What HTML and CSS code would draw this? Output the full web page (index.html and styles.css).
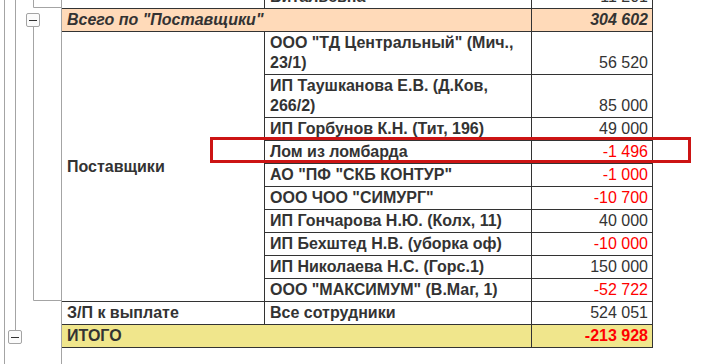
FILE: index.html
```html
<!DOCTYPE html>
<html lang="ru">
<head>
<meta charset="utf-8">
<title>Отчет</title>
<link rel="stylesheet" href="styles.css">
</head>
<body>
<div class="outline">
  <svg width="61" height="364" viewBox="0 0 61 364">
    <g stroke="#a4a4a4" stroke-width="1" fill="none">
      <line x1="4.5" y1="0" x2="4.5" y2="364"/>
      <line x1="15.5" y1="0" x2="15.5" y2="330"/>
      <polyline points="33.5,0 33.5,7.5 61,7.5"/>
      <polyline points="33.5,27 33.5,300.5 61,300.5"/>
    </g>
    <rect x="26.5" y="13.5" width="13" height="13" rx="1.5" fill="#fbfbfb" stroke="#a4a4a4"/>
    <line x1="29" y1="20.5" x2="37" y2="20.5" stroke="#333" stroke-width="1"/>
    <rect x="8.5" y="330.5" width="13" height="13" rx="1.5" fill="#fbfbfb" stroke="#a4a4a4"/>
    <line x1="11" y1="337.5" x2="19" y2="337.5" stroke="#333" stroke-width="1"/>
  </svg>
</div>
<div class="panel">
  <table class="report">
    <colgroup>
      <col class="c1"><col class="c2"><col class="c3">
    </colgroup>
    <tr>
      <td></td>
      <td class="name">Витальевна</td>
      <td class="num">11&nbsp;201</td>
    </tr>
    <tr class="group">
      <td colspan="2" class="label">Всего по "Поставщики"</td>
      <td class="num">304&nbsp;602</td>
    </tr>
    <tr>
      <td rowspan="10" class="cat">Поставщики</td>
      <td class="name">ООО "ТД Центральный" (Мич., 23/1)</td>
      <td class="num">56&nbsp;520</td>
    </tr>
    <tr>
      <td class="name">ИП Таушканова Е.В. (Д.Ков, 266/2)</td>
      <td class="num">85&nbsp;000</td>
    </tr>
    <tr>
      <td class="name">ИП Горбунов К.Н. (Тит, 196)</td>
      <td class="num">49&nbsp;000</td>
    </tr>
    <tr>
      <td class="name">Лом из ломбарда</td>
      <td class="num neg">-1&nbsp;496</td>
    </tr>
    <tr>
      <td class="name">АО "ПФ "СКБ КОНТУР"</td>
      <td class="num neg">-1&nbsp;000</td>
    </tr>
    <tr>
      <td class="name">ООО ЧОО "СИМУРГ"</td>
      <td class="num neg">-10&nbsp;700</td>
    </tr>
    <tr>
      <td class="name">ИП Гончарова Н.Ю. (Колх, 11)</td>
      <td class="num">40&nbsp;000</td>
    </tr>
    <tr>
      <td class="name">ИП Бехштед Н.В. (уборка оф)</td>
      <td class="num neg">-10&nbsp;000</td>
    </tr>
    <tr>
      <td class="name">ИП Николаева Н.С. (Горс.1)</td>
      <td class="num">150&nbsp;000</td>
    </tr>
    <tr>
      <td class="name">ООО "МАКСИМУМ" (В.Маг, 1)</td>
      <td class="num neg">-52&nbsp;722</td>
    </tr>
    <tr>
      <td class="cat top">З/П к выплате</td>
      <td class="name">Все сотрудники</td>
      <td class="num">524&nbsp;051</td>
    </tr>
    <tr class="total">
      <td colspan="2" class="label">ИТОГО</td>
      <td class="num neg">-213&nbsp;928</td>
    </tr>
  </table>
</div>
<div class="highlight"></div>
</body>
</html>
```

FILE: styles.css
```css
html, body {
  margin: 0;
  padding: 0;
  background: #ffffff;
}
body {
  position: relative;
  display: flex;
  align-items: flex-start;
  height: 364px;
  overflow: hidden;
  font-family: "Liberation Sans", Arial, sans-serif;
  font-size: 16px;
  color: #333333;
}
.outline {
  width: 61px;
  flex: none;
  height: 364px;
}
.outline svg {
  display: block;
}
.panel {
  border-left: 1px solid #a4a4a4;
  min-height: 364px;
  flex: none;
}
.report {
  margin-top: -14px;
  border-collapse: separate;
  border-spacing: 0;
  table-layout: fixed;
  width: 591px;
}
.report col.c1 { width: 203px; }
.report col.c2 { width: 267px; }
.report col.c3 { width: 121px; }
.report td {
  border-right: 1px solid #333333;
  border-bottom: 1px solid #333333;
  padding: 1px 4px 1px 5px;
  line-height: 20px;
  vertical-align: bottom;
  text-align: left;
}
.report td.name,
.report td.cat,
.report td.label {
  font-weight: bold;
}
.report td.cat {
  vertical-align: middle;
}
.report td.cat.top {
  vertical-align: bottom;
}
.report td.num {
  text-align: right;
  padding-right: 4px;
}
.report td.neg {
  color: #ff0000;
}
.report tr.group td {
  background: #ffdab9;
  font-weight: bold;
  font-style: italic;
}
.report tr.total td {
  background: #f0e68c;
  font-weight: bold;
}
.highlight {
  position: absolute;
  left: 210px;
  top: 137px;
  width: 475px;
  height: 20px;
  border: 3px solid #cc1414;
}
```
